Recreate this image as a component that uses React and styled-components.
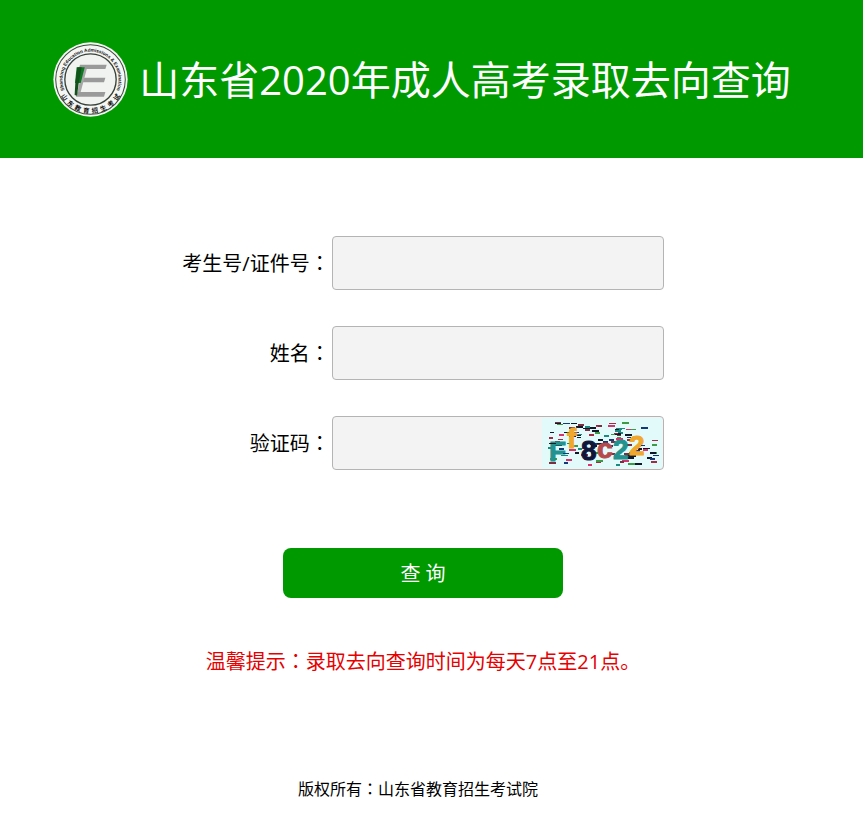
import React from "react";
import styled, { createGlobalStyle } from "styled-components";

const GlobalStyle = createGlobalStyle`
  * { box-sizing: border-box; }
  body {
    margin: 0;
    background: #fff;
    color: #000;
    font-family: "Open Sans", "Noto Sans CJK SC", sans-serif;
  }
`;

const Header = styled.header`
  display: flex;
  align-items: center;
  justify-content: center;
  gap: 11px;
  min-height: 158px;
  padding-right: 19px;
  background: #090;
  color: #fff;
`;

const Logo = styled.svg`
  flex: none;
  width: 75px;
  height: 75px;
`;

const Title = styled.h1`
  margin: 0;
  padding-top: 2px;
  font-size: 40px;
  line-height: 56px;
  font-weight: 400;
`;

const Main = styled.main`
  display: flex;
  flex-direction: column;
  align-items: center;
  padding: 78px 17px 0 0;
`;

const Form = styled.form`
  display: flex;
  flex-direction: column;
  align-items: center;
`;

const Fields = styled.div`
  display: grid;
  grid-template-columns: auto 332px;
  column-gap: 2px;
  row-gap: 36px;
  align-items: center;
`;

const Label = styled.label`
  font-size: 20px;
  line-height: 30px;
  text-align: right;
`;

const Colon = styled.span`
  font-family: "Noto Sans CJK TC", sans-serif;
`;

const Field = styled.div`
  display: flex;
  height: 54px;
  padding: 1px;
  border: 1px solid #b4b4b4;
  border-radius: 4px;
  background: #f3f3f3;
`;

const Input = styled.input`
  flex: 1;
  min-width: 0;
  padding: 0 10px;
  border: 0;
  outline: 0;
  background: transparent;
  font: inherit;
  font-size: 20px;
`;

const Captcha = styled.svg`
  flex: none;
  width: 120px;
  height: 50px;
`;

const Submit = styled.button`
  width: 280px;
  height: 50px;
  margin-top: 78px;
  padding: 0 0 2px;
  border: 0;
  border-radius: 8px;
  background: #090;
  color: #fff;
  font-family: inherit;
  font-size: 20px;
  cursor: pointer;
`;

const Notice = styled.p`
  margin: 48px 0 0;
  color: #e60000;
  font-size: 20px;
  line-height: 30px;
`;

const Footer = styled.footer`
  padding: 99px 27px 20px 0;
  font-size: 16px;
  line-height: 24px;
  text-align: center;
`;

function Seal() {
  return (
    <Logo viewBox="25 19 222 222" role="img" aria-label="山东省教育招生考试院">
      <defs>
        <path id="ringTop" d="M 64 172 A 83 83 0 1 1 208 172" />
        <path id="ringBottom" d="M 36 143 A 101 101 0 0 0 236 143" />
      </defs>
      <circle cx="136" cy="130" r="110" fill="#f4f7f4" />
      <circle cx="136" cy="130" r="103" fill="#f4f7f4" stroke="#3c4a3c" strokeWidth="3" />
      <circle cx="136" cy="130" r="76" fill="#f1f3f1" stroke="#39423a" strokeWidth="4" />
      <text fill="#111" fontFamily="Liberation Sans, sans-serif" fontWeight="700" fontSize="14">
        <textPath href="#ringTop" startOffset="50%" textAnchor="middle">
          Shandong Education Admissions &amp; Examination
        </textPath>
      </text>
      <text fill="#111" fontFamily="Noto Sans CJK SC, sans-serif" fontWeight="700" fontSize="19">
        <textPath href="#ringBottom" startOffset="50%" textAnchor="middle">
          {"山东教育招生考试".split("").join("\u00a0\u00a0")}
        </textPath>
      </text>
      <path d="M105 86H184L180 99H101Z M112 125H180L176 138H108Z M97 167H180L176 181H93Z" fill="#9a9a9a" />
      <path d="M125 99L107 167H97L113 99Z" fill="#a6a6a6" />
      <path d="M95 94H119L107 140H90Z" fill="#0b7a20" />
      <path d="M97 94L91 142L89 176L96 178L101 142L110 94Z" fill="#14521c" />
    </Logo>
  );
}

const dashColors = ["#123a78", "#a32a42", "#1b8a80", "#101828", "#101828", "#d6336c", "#3f9a46", "#7a3040"];

function createRandom(seed) {
  let state = seed;
  return () => {
    state = (state * 1664525 + 1013904223) % 4294967296;
    return state / 4294967296;
  };
}

const random = createRandom(2020);

const dashes = Array.from({ length: 120 }, () => ({
  x: 5 + Math.floor(random() * 108),
  y: 4 + Math.floor(random() * 43),
  width: 4 + Math.floor(random() * 4),
  color: dashColors[Math.floor(random() * dashColors.length)],
}));

const characters = [
  { value: "F", x: 7, y: 43, color: "#24928f" },
  { value: "f", x: 25, y: 30, color: "#f0a72c" },
  { value: "8", x: 39, y: 42, color: "#10163a" },
  { value: "c", x: 55, y: 40, color: "#b54a4c" },
  { value: "2", x: 71, y: 41, color: "#24928f" },
  { value: "2", x: 87, y: 37, color: "#f0a72c" },
];

function CaptchaImage() {
  return (
    <Captcha viewBox="0 0 120 50" role="img" aria-label="验证码图片">
      <rect width="120" height="50" fill="#e2fbfa" />
      {dashes.map((d, i) => (
        <rect key={i} x={d.x} y={d.y} width={d.width} height={i % 3 ? 2 : 1} fill={d.color} />
      ))}
      {characters.map((c, i) => (
        <text
          key={i}
          x={c.x}
          y={c.y}
          fill={c.color}
          stroke={c.color}
          strokeWidth="1"
          fontSize="28"
          fontWeight="700"
          fontFamily="Liberation Sans, sans-serif"
        >
          {c.value}
        </text>
      ))}
      {dashes.slice(0, 8).map((d, i) => (
        <rect key={i} x={d.x} y={d.y} width={d.width} height="1" fill={d.color} />
      ))}
    </Captcha>
  );
}

export default function App() {
  return (
    <>
      <GlobalStyle />
      <Header>
        <Seal />
        <Title>山东省2020年成人高考录取去向查询</Title>
      </Header>
      <Main>
        <Form onSubmit={(e) => e.preventDefault()}>
          <Fields>
            <Label htmlFor="candidate">考生号/证件号<Colon>：</Colon></Label>
            <Field><Input id="candidate" type="text" /></Field>
            <Label htmlFor="name">姓名<Colon>：</Colon></Label>
            <Field><Input id="name" type="text" /></Field>
            <Label htmlFor="code">验证码<Colon>：</Colon></Label>
            <Field>
              <Input id="code" type="text" autoComplete="off" />
              <CaptchaImage />
            </Field>
          </Fields>
          <Submit type="submit">查 询</Submit>
        </Form>
        <Notice>温馨提示<Colon>：</Colon>录取去向查询时间为每天7点至21点。</Notice>
      </Main>
      <Footer>版权所有<Colon>：</Colon>山东省教育招生考试院</Footer>
    </>
  );
}
